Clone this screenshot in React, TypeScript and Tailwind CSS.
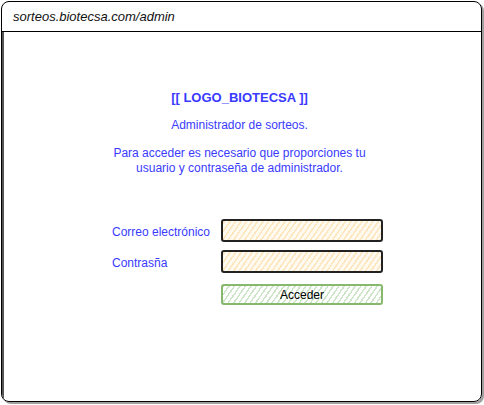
const hatchOrange =
  "bg-[repeating-linear-gradient(-55deg,#fffaf0_0px,#fffaf0_3px,#fde6bd_3px,#fde6bd_4.5px)]";
const hatchGreen =
  "bg-[repeating-linear-gradient(-55deg,#ffffff_0px,#ffffff_3px,#cfe5c9_3px,#cfe5c9_4.5px)]";

const Field = ({ label }: { label: string }) => (
  <>
    <span className="pt-[2px] text-[12px] text-[#3a3aff] leading-none whitespace-nowrap">{label}</span>
    <div className={`h-[23px] rounded-[3px] border-2 border-[#222] ${hatchOrange}`} />
  </>
);

export default function App() {
  return (
    <div className="w-[484px] h-[405px] bg-white font-['Liberation_Sans',sans-serif]">
      <div className="ml-[1px] mt-[1px] w-[481px] h-[401px] border border-black rounded-[8px] shadow-[2px_2px_0_#a0a0a0] flex flex-col overflow-hidden">
        <div className="h-[30px] shrink-0 border-b border-black flex items-center px-[11px]">
          <span className="italic text-[13px] text-[#111]">sorteos.biotecsa.com/admin</span>
        </div>

        <div className="flex-1 border-l-2 border-l-[#555] flex flex-col">
          <div className="flex flex-col items-center pr-[6px] text-[#3a3aff] pt-[58px]">
            <h1 className="text-[13px] font-bold leading-[16px]">[[ LOGO_BIOTECSA ]]</h1>
            <p className="mt-[12px] text-[12px] leading-[14px]">Administrador de sorteos.</p>
            <p className="mt-[14px] text-[12px] leading-[15px] text-center">
              Para acceder es necesario que proporciones tu
              <br />
              usuario y contraseña de administrador.
            </p>
          </div>

          <div className="mt-[43px] ml-[108px] grid grid-cols-[109px_162px] items-center gap-y-[8px]">
            <Field label="Correo electrónico" />
            <Field label="Contrasña" />
            <span />
            <div
              className={`mt-[3px] h-[21px] rounded-[3px] border-2 border-[#86b96e] ${hatchGreen} flex items-center justify-center text-[12px] text-black`}
            >
              Acceder
            </div>
          </div>
        </div>
      </div>
    </div>
  );
}
